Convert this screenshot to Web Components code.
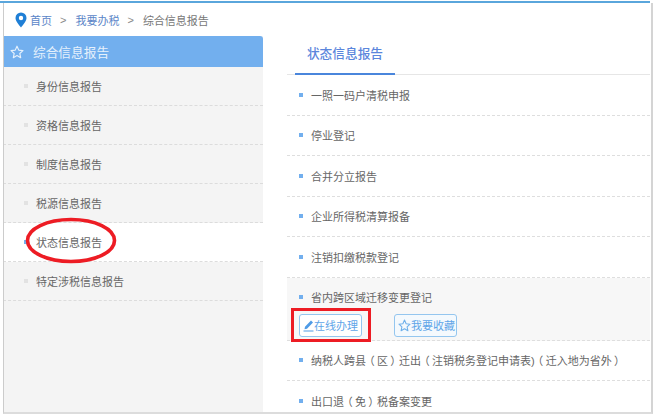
<!DOCTYPE html>
<html><head><meta charset="utf-8"><style>
html,body{margin:0;height:416px;overflow:hidden;background:#fff;font-family:"Liberation Sans","Noto Sans CJK SC",sans-serif}
.p{display:inline-block;width:11px;text-align:center;font-feature-settings:"palt"}
</style></head><body>
<tax-page>
  <tax-crumbs slot="crumbs"></tax-crumbs>
  <tax-side slot="side" title-text="综合信息报告">
    <tax-side-item>身份信息报告</tax-side-item>
    <tax-side-item>资格信息报告</tax-side-item>
    <tax-side-item>制度信息报告</tax-side-item>
    <tax-side-item>税源信息报告</tax-side-item>
    <tax-side-item active>状态信息报告</tax-side-item>
    <tax-side-item>特定涉税信息报告</tax-side-item>
  </tax-side>
  <tax-main slot="main">
    <tax-row>一照一码户清税申报</tax-row>
    <tax-row>停业登记</tax-row>
    <tax-row>合并分立报告</tax-row>
    <tax-row>企业所得税清算报备</tax-row>
    <tax-row>注销扣缴税款登记</tax-row>
    <tax-row open>省内跨区域迁移变更登记</tax-row>
    <tax-row>纳税人跨县<span class="p">（</span>区<span class="p">）</span>迁出<span class="p">（</span>注销税务登记申请表)<span class="p">（</span>迁入地为省外<span class="p">）</span></tax-row>
    <tax-row last>出口退<span class="p">（</span>免<span class="p">）</span>税备案变更</tax-row>
  </tax-main>
</tax-page>
<script>
const STAR="M12 2l3 6.800 7.200.8-5.400 4.900 1.500 7.200L12 18l-6.300 3.700 1.500-7.200L1.800 9.600 9 8.800z";
function def(name,html){customElements.define(name,class extends HTMLElement{constructor(){super();this.attachShadow({mode:'open'}).innerHTML=html;}});}
def('tax-page',`<style>
:host{display:block;position:relative;box-sizing:border-box;width:653px;height:413px;margin-top:1px;overflow:hidden;background:#fff;color:#666}
.top{height:2px;width:650px;background:#5aa6dc}
.frame{box-sizing:border-box;height:411px;margin-left:3px;border-left:1px solid #ccc;border-right:2px solid #d4d4d4;border-bottom:2px solid #dcdcdc;padding-right:1px;display:flex;flex-direction:column}
.body{display:flex;flex:1;min-height:0;overflow:hidden}
.ellipse{position:absolute;left:26px;top:217px;width:90px;height:45px;overflow:visible}
.box{position:absolute;left:291px;top:307px;width:80px;height:34px;box-sizing:border-box;border:3px solid #ed1c24}
</style><div class="top"></div><div class="frame"><slot name="crumbs"></slot><div class="body"><slot name="side"></slot><slot name="main"></slot></div></div>
<svg class="ellipse" viewBox="0 0 90 45"><ellipse cx="45" cy="22.5" rx="43.500" ry="21" fill="none" stroke="#ed1c24" stroke-width="3.600"/></svg>
<div class="box"></div>`);
def('tax-crumbs',`<style>
:host{display:flex;align-items:center;height:33px;box-sizing:border-box;padding:1px 0 0 11px;font-size:11px;color:#777;flex:none}
svg{width:12px;height:16px;margin-right:3px}
a{color:#5b86c8}i{font-style:normal;margin:0 9px 0 8px;color:#888}
</style><svg viewBox="0 0 12 16"><path fill="#1f7fd6" fill-rule="evenodd" d="M6 .5a5.500 5.500 0 0 1 5.500 5.500c0 3.600-3.600 6.800-5.500 9.500C4.100 12.800.5 9.600.5 6A5.500 5.500 0 0 1 6 .5zM6 3.800a2.200 2.200 0 1 0 0 4.400 2.200 2.200 0 0 0 0-4.400z"/></svg><a>首页</a><i>&gt;</i><a>我要办税</a><i>&gt;</i><span>综合信息报告</span>`);
customElements.define('tax-side',class extends HTMLElement{constructor(){super();this.attachShadow({mode:'open'}).innerHTML=`<style>
:host{display:flex;flex-direction:column;width:260px;flex:none;background:#f4f4f4;margin-left:-1px}
.h{height:31px;background:#72afee;color:#e6f1fc;font-size:12.700px;display:flex;align-items:center;border-left:1px solid #5aa0e6;border-radius:0 3px 0 0;box-sizing:border-box;padding-left:6px}
svg{width:14px;height:14px;margin-right:9px}
</style><div class="h"><svg viewBox="0 0 24 24"><path fill="none" stroke="#e6f1fc" stroke-width="2" stroke-linejoin="round" d="${STAR}"/></svg><span>${this.getAttribute('title-text')}</span></div><slot></slot>`;}});
customElements.define('tax-side-item',class extends HTMLElement{constructor(){super();this.attachShadow({mode:'open'}).innerHTML=`<style>
:host{display:flex;align-items:center;height:39px;box-sizing:border-box;border-bottom:1px dashed #dcdcdc;padding:0 0 0 21px;font-size:11px;color:#666}
:host([active]){background:#fff}
b{width:4px;height:4px;background:#e2e2e2;margin-right:8px;flex:none}
:host([active]) b{background:#72afee}
</style><b></b><slot></slot>`;}});
def('tax-main',`<style>
:host{display:block;flex:1;min-width:0;padding-left:24px}
.tabs{height:39px;box-sizing:border-box;border-bottom:1px solid #e6e6e6}
.tab{width:100px;height:39px;box-sizing:border-box;margin-left:8px;border-bottom:2px solid #4a86dc;color:#5b86dc;font-size:12.700px;text-align:center;line-height:37px;font-weight:500}
</style><div class="tabs"><div class="tab">状态信息报告</div></div><slot></slot>`);
customElements.define('tax-row',class extends HTMLElement{constructor(){super();const open=this.hasAttribute('open');this.attachShadow({mode:'open'}).innerHTML=`<style>
:host{display:block;box-sizing:border-box;height:40.500px;border-bottom:1px dashed #dedede;font-size:11px;color:#666}
:host([open]){height:63px;background:#f7f7f7}
:host([last]){border-bottom:0}
.t{height:39px;display:flex;align-items:center;padding-left:12px}
b{width:4px;height:4px;background:#72afee;margin-right:8px;flex:none}
.acts{display:flex;gap:32px;padding-left:12px;margin-top:-3px}
.btn{width:63px;height:23px;box-sizing:border-box;border:1px solid #94c6ef;border-radius:3px;background:#fff;color:#5fa5e8;font-size:11px;display:flex;align-items:center;padding-left:3px;white-space:nowrap}
.btn svg{flex:none}
.pen{width:11px;height:13px}
.st{width:13px;height:13px}
.star{background:#f4f9fd}
</style><div class="t"><b></b><span><slot></slot></span></div>${open?`<div class="acts"><div class="btn"><svg class="pen" viewBox="0 0 11 13"><path fill="#4f9be6" d="M8 1.500l2 2-6 6.200-2.500.6.500-2.600zM.5 11.500h10v1H.5z"/></svg><span>在线办理</span></div><div class="btn star"><svg class="st" viewBox="0 0 24 24"><path fill="none" stroke="#6fb0ea" stroke-width="2" stroke-linejoin="round" d="${STAR}"/></svg><span>我要收藏</span></div></div>`:''}`;}});
</script></body></html>
